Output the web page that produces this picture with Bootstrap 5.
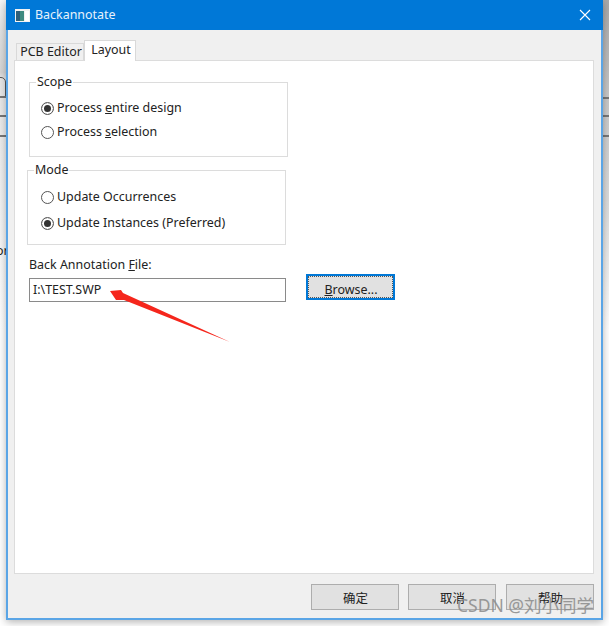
<!doctype html>
<html lang="en">
<head>
    <meta charset="utf-8">
    <title>Backannotate</title>
    <link href="https://cdn.jsdelivr.net/npm/bootstrap@5.3.3/dist/css/bootstrap.min.css" rel="stylesheet">
    <style>
        html, body { height: 100%; }
        body { background: #fff; font: 12.45px/18px "Noto Sans", "Noto Sans CJK SC", sans-serif; color: #222; overflow: hidden; }

        /* desktop behind the dialog */
        .desk { position: relative; width: 609px; height: 626px; background: #fff; overflow: hidden; }
        .desk-strip { position: absolute; top: 0; width: 7px; height: 330px; background: linear-gradient(#f6f6f6, #e4e4e4 8%, #d6d6d6 22%, #e8e8e8 24%, #efefef 50%, #fff 100%); }
        .strip-left { left: 0; }
        .strip-right { left: 603px; width: 6px; background: linear-gradient(#a9a9a9, #c9c9c9 30%, #dcdcdc 60%, #fff 100%); }
        .strip-line { position: absolute; left: 0; right: 0; height: 2px; background: #777; }
        .strip-arc { position: absolute; left: -8px; top: 77px; width: 14px; height: 20px; border: 1px solid #555; border-radius: 0 5px 0 0; }
        .strip-word { position: absolute; left: -4px; top: 242px; }

        /* dialog window */
        .dlg { position: absolute; left: 6px; top: 0; width: 597px; height: 620px; background: #f0f0f0; border: 1px solid #5aa5e6; border-width: 0 2px 2px; box-shadow: 0 2px 8px rgba(0, 0, 0, .3); }
        .dlg-title { height: 30px; margin: 0 -2px; padding: 0 0 0 9px; background: #0078d7; color: #e8f2fb; gap: 5px; }
        .dlg-close { margin-left: auto; margin-right: 12px; width: 12px; height: 12px; }
        .dlg-body { padding: 9px 7px 0 6px; }

        .tab-row { height: 21px; padding-left: 2px; align-items: flex-end; }
        .tab-item { height: 17px; width: 68px; line-height: 15px; text-align: center; border: 1px solid #d9d9d9; border-bottom: 0; background: #f0f0f0; padding-left: 2px; }
        .tab-active { height: 21px; width: 52px; line-height: 17px; background: #fff; margin-bottom: -1px; position: relative; z-index: 1; }
        .tab-panel { height: 514px; background: #fff; border: 1px solid #dcdcdc; padding: 21px 0 0 14px; }

        .grp { position: relative; width: 259px; height: 75px; border: 1px solid #dcdcdc; padding: 16px 0 0 11px; }
        .grp-mode { margin: 13px 0 0 -2px; padding: 17px 0 0 13px; }
        .grp-name { position: absolute; left: 6px; top: -10px; padding: 0 1px; background: #fff; }
        .radio-row { height: 18px; gap: 3px; }
        .grp .radio-row + .radio-row { margin-top: 6px; }
        .grp-mode .radio-row + .radio-row { margin-top: 8px; }
        .radio-dot { width: 13px; height: 13px; flex: none; border: 1px solid #555; border-radius: 50%; background: #fff; }
        .radio-on { box-shadow: inset 0 0 0 2px #fff, inset 0 0 0 7px #333; }

        .file-label { margin-top: 11px; height: 18px; }
        .file-row { margin-top: 0; gap: 20px; align-items: flex-start; }
        .file-input { width: 257px; height: 24px; margin-top: 4px; border: 1px solid #8a8a8a; padding: 0 3px; line-height: 21px; }
        .win-btn { width: 88px; height: 26px; padding: 0 0 0 1px; border: 1px solid #adadad; background: #e1e1e1; color: #222; font: inherit; border-radius: 0; line-height: 27px; }
        .win-default { width: 89px; border: 2px solid #0078d7; outline: 1px dotted #555; outline-offset: -3px; }
        .btn-row { margin-top: 10px; gap: 10px; }
        .btn-row .win-btn:first-child { margin-right: -1px; }

        .note-arrow { position: absolute; left: 100px; top: 280px; width: 140px; height: 70px; }
        .wm { position: absolute; left: 457px; top: 594px; color: #8f8f8f; font-size: 17.5px; line-height: 22px; opacity: .9; }
    </style>
</head>
<body>

<div class="desk">
    <div class="desk-strip strip-left">
        <div class="strip-arc"></div>
        <div class="strip-line" style="top: 96px"></div>
        <div class="strip-line" style="top: 115px"></div>
        <div class="strip-line" style="top: 135px"></div>
        <div class="strip-word">or</div>
    </div>
    <div class="desk-strip strip-right">
        <div class="strip-line" style="top: 97px"></div>
        <div class="strip-line" style="top: 115px"></div>
        <div class="strip-line" style="top: 135px"></div>
    </div>

    <div class="dlg">
        <div class="dlg-title d-flex align-items-center">
            <svg width="15" height="13" viewBox="0 0 15 13">
                <rect width="15" height="13" fill="#f2f2f2"/>
                <rect x="1" y="2" width="8" height="10" fill="#3f8a80"/>
                <rect x="1" y="2" width="4" height="10" fill="#2f5f78"/>
                <rect x="10" y="2" width="4" height="10" fill="#fff"/>
            </svg>
            <span>Backannotate</span>
            <svg class="dlg-close" viewBox="0 0 12 12"><path d="M1 1l10 10M11 1L1 11" stroke="#fff" stroke-width="1.1" fill="none"/></svg>
        </div>

        <div class="dlg-body">
            <div class="d-flex tab-row">
                <div class="tab-item">PCB Editor</div>
                <div class="tab-item tab-active">Layout</div>
            </div>
            <div class="tab-panel">
                <div class="grp">
                    <span class="grp-name">Scope</span>
                    <div class="d-flex align-items-center radio-row"><span class="radio-dot radio-on"></span><span>Process <u>e</u>ntire design</span></div>
                    <div class="d-flex align-items-center radio-row"><span class="radio-dot"></span><span>Process <u>s</u>election</span></div>
                </div>
                <div class="grp grp-mode">
                    <span class="grp-name">Mode</span>
                    <div class="d-flex align-items-center radio-row"><span class="radio-dot"></span><span>Update Occurrences</span></div>
                    <div class="d-flex align-items-center radio-row"><span class="radio-dot radio-on"></span><span>Update Instances (Preferred)</span></div>
                </div>
                <div class="file-label">Back Annotation <u>F</u>ile:</div>
                <div class="d-flex file-row">
                    <div class="file-input">I:\TEST.SWP</div>
                    <button class="win-btn win-default" type="button"><u>B</u>rowse...</button>
                </div>
            </div>
            <div class="d-flex justify-content-end btn-row">
                <button class="win-btn" type="button">确定</button>
                <button class="win-btn" type="button">取消</button>
                <button class="win-btn" type="button">帮助</button>
            </div>
        </div>
    </div>

    <svg class="note-arrow" viewBox="0 0 140 70">
        <path d="M10 11L21 10L23 13L130 62L24 20L16 20Z" fill="#f5261c"/>
    </svg>
    <div class="wm">CSDN @刘小同学</div>
</div>

<script src="https://cdn.jsdelivr.net/npm/bootstrap@5.3.3/dist/js/bootstrap.bundle.min.js"></script>
</body>
</html>
